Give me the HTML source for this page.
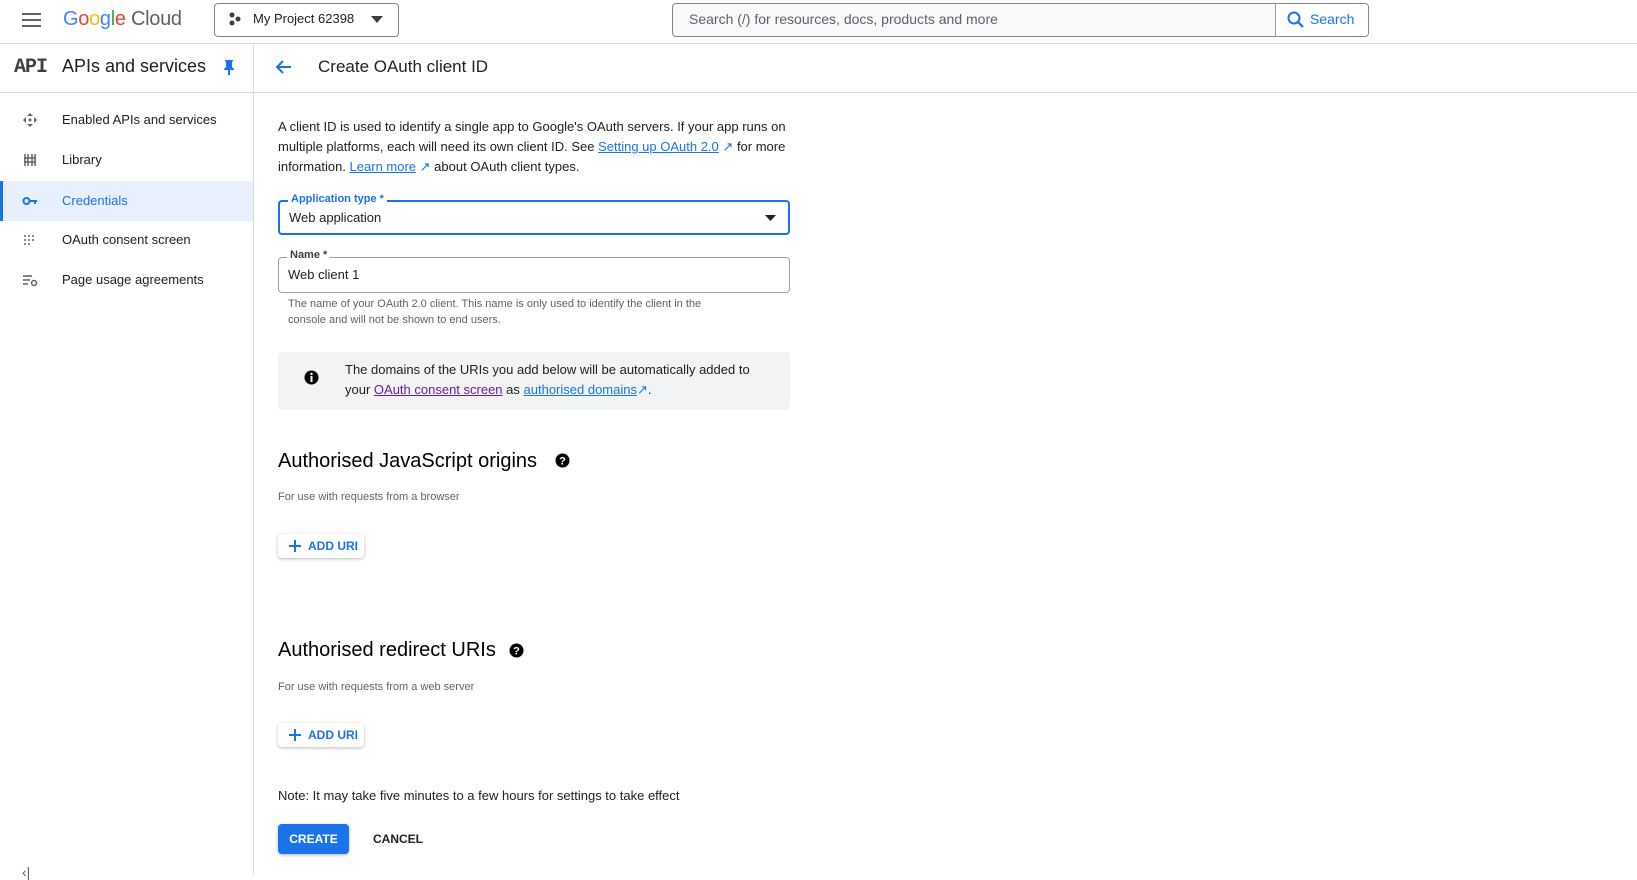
<!DOCTYPE html>
<html><head><meta charset="utf-8"><style>
*{box-sizing:border-box;margin:0;padding:0}
body{width:1637px;height:874px;overflow:hidden;background:#fff;font-family:"Liberation Sans",Arial,sans-serif;color:#202124;position:relative}
.a{position:absolute}
.hdr{top:0;left:0;width:1637px;height:44px;border-bottom:1px solid #dadce0}
.sub{top:44px;left:0;width:1637px;height:49px;border-bottom:1px solid #dadce0}
.side{top:44px;left:253px;width:1px;height:830px;background:#dadce0}
.nav{left:0;width:253px;height:40px;font-size:13px;line-height:40px;padding-left:62px;color:#202124}
.nav.act{background:#e8f0fe;color:#1a73e8;border-left:3px solid #1a73e8;padding-left:59px}
.ic{position:absolute;left:22px;top:12px}
.t13{font-size:13px;line-height:20px}
a{color:#1a73e8;text-decoration:underline}
.field{border:1px solid #9aa0a6;border-radius:4px;left:278px;width:512px}
.lab{position:absolute;top:-9px;left:8px;background:#fff;padding:0 3px;font-size:11px;font-weight:bold;color:#3c4043}
.btn{border-radius:4px;box-shadow:0 1px 3px rgba(60,64,67,.35);font-size:12px;font-weight:bold;color:#1a73e8;background:#fff}
h2{font-weight:normal;font-size:20px;color:#000}
</style></head><body>
<div class="a hdr"></div>
<svg class="a" style="left:22px;top:13px" width="19" height="14"><rect y="0" width="19" height="2" fill="#5f6368"/><rect y="6" width="19" height="2" fill="#5f6368"/><rect y="12" width="19" height="2" fill="#5f6368"/></svg>
<div class="a" style="left:63px;top:8px;font-size:20px;letter-spacing:-0.3px"><span style="color:#4285f4">G</span><span style="color:#ea4335">o</span><span style="color:#fbbc04">o</span><span style="color:#4285f4">g</span><span style="color:#34a853">l</span><span style="color:#ea4335">e</span> <span style="color:#5f6368">Cloud</span></div>
<div class="a" style="left:214px;top:3px;width:185px;height:34px;border:1px solid #80868b;border-radius:4px"></div>
<svg class="a" style="left:229px;top:12px" width="12" height="14"><circle cx="3" cy="3" r="2.5" fill="#3c4043"/><circle cx="9" cy="7" r="2.5" fill="#3c4043"/><circle cx="3" cy="11" r="2.5" fill="#3c4043"/></svg>
<div class="a" style="left:253px;top:11px;font-size:13px;color:#202124">My Project 62398</div>
<svg class="a" style="left:371px;top:16px" width="12" height="7"><path d="M0 0h12L6 7z" fill="#3c4043"/></svg>
<div class="a" style="left:672px;top:3px;width:697px;height:34px;border:1px solid #80868b;border-radius:4px;background:#f8f9fa"></div>
<div class="a" style="left:1275px;top:4px;width:93px;height:32px;background:#fff;border-left:1px solid #9aa0a6;border-radius:0 3px 3px 0"></div>
<div class="a" style="left:689px;top:11px;font-size:14px;color:#5f6368">Search (/) for resources, docs, products and more</div>
<svg class="a" style="left:1287px;top:11px" width="18" height="18"><circle cx="7" cy="7" r="5.5" stroke="#1a73e8" stroke-width="2" fill="none"/><path d="M11 11l5 5" stroke="#1a73e8" stroke-width="2.2"/></svg>
<div class="a" style="left:1310px;top:11px;font-size:14px;color:#1a73e8">Search</div>

<div class="a sub"></div>
<div class="a side"></div>
<div class="a" style="left:14px;top:56px;font-size:20px;font-weight:bold;color:#3c4043;font-family:'Liberation Mono',monospace;letter-spacing:-1px">API</div>
<div class="a" style="left:62px;top:56px;font-size:18px;color:#202124">APIs and services</div>
<svg class="a" style="left:223px;top:59px" width="12" height="16"><path d="M2 1h8v1l-1 1v5l2 2v1H7v5H5v-5H1v-1l2-2V3L2 2z" fill="#1a73e8"/></svg>
<svg class="a" style="left:274px;top:59px" width="18" height="16"><path d="M17 8H3M9 2L3 8l6 6" stroke="#1a73e8" stroke-width="2" fill="none"/></svg>
<div class="a" style="left:318px;top:57px;font-size:17px;color:#202124">Create OAuth client ID</div>

<div class="a nav" style="top:100px"><svg class="ic" width="16" height="16"><path d="M8 1l3 3H5zM8 15l-3-3h6zM1 8l3-3v6zM15 8l-3 3V5z" fill="#5f6368"/><circle cx="8" cy="8" r="1.5" fill="#5f6368"/></svg>Enabled APIs and services</div>
<div class="a nav" style="top:140px"><svg class="ic" width="16" height="16"><path d="M3 2v12M6 2v12M10 2v12M13 2v12M2 6h12M2 10h12" stroke="#5f6368" stroke-width="1.5"/></svg>Library</div>
<div class="a nav act" style="top:181px"><svg class="ic" width="16" height="16" style="left:19px"><circle cx="4.5" cy="8" r="3" stroke="#1a73e8" stroke-width="2" fill="none"/><path d="M7 7h8v2h-1v2h-2V9h-5z" fill="#1a73e8"/></svg>Credentials</div>
<div class="a nav" style="top:220px"><svg class="ic" width="16" height="16"><g fill="#5f6368"><circle cx="3" cy="4" r="1"/><circle cx="7" cy="4" r="1"/><circle cx="11" cy="4" r="1"/><circle cx="3" cy="8" r="1"/><circle cx="7" cy="8" r="1"/><circle cx="11" cy="8" r="1"/><circle cx="3" cy="12" r="1"/><circle cx="7" cy="12" r="1"/></g></svg>OAuth consent screen</div>
<div class="a nav" style="top:260px"><svg class="ic" width="16" height="16"><path d="M1 4h9M1 8h7M1 12h5" stroke="#5f6368" stroke-width="1.5"/><circle cx="12" cy="11" r="2.5" stroke="#5f6368" stroke-width="1.5" fill="none"/></svg>Page usage agreements</div>

<div class="a t13" style="left:278px;top:117px;width:520px">A client ID is used to identify a single app to Google's OAuth servers. If your app runs on multiple platforms, each will need its own client ID. See <a>Setting up OAuth 2.0</a> <span style="color:#1a73e8">↗</span> for more information. <a>Learn more</a> <span style="color:#1a73e8">↗</span> about OAuth client types.</div>

<div class="a field" style="top:200px;height:35px;border:2px solid #1a73e8"><div class="lab" style="color:#1a73e8">Application type *</div><div style="position:absolute;left:9px;top:8px;font-size:13px">Web application</div><svg style="position:absolute;right:12px;top:13px" width="11" height="6"><path d="M0 0h11L5.5 6z" fill="#202124"/></svg></div>
<div class="a field" style="top:257px;height:36px"><div class="lab">Name *</div><div style="position:absolute;left:9px;top:9px;font-size:13px">Web client 1</div></div>
<div class="a" style="left:288px;top:296px;width:450px;font-size:11px;line-height:16px;color:#5f6368">The name of your OAuth 2.0 client. This name is only used to identify the client in the console and will not be shown to end users.</div>

<div class="a" style="left:278px;top:352px;width:512px;height:58px;background:#f1f3f4;border-radius:4px"></div>
<svg class="a" style="left:304px;top:370px" width="15" height="15"><circle cx="7.5" cy="7.5" r="7" fill="#000"/><rect x="6.5" y="6" width="2" height="6" fill="#fff"/><circle cx="7.5" cy="4" r="1.2" fill="#fff"/></svg>
<div class="a t13" style="left:345px;top:360px;width:420px">The domains of the URIs you add below will be automatically added to your <a style="color:#681da8">OAuth consent screen</a> as <a>authorised domains</a><span style="color:#1a73e8">↗</span>.</div>

<h2 class="a" style="left:278px;top:450px">Authorised JavaScript origins</h2>
<svg class="a" style="left:555px;top:453px" width="15" height="15"><circle cx="7.5" cy="7.5" r="7" fill="#000"/><text x="7.5" y="11.5" font-size="11" font-weight="bold" fill="#fff" text-anchor="middle" font-family="Liberation Sans">?</text></svg>
<div class="a" style="left:278px;top:491px;font-size:11px;color:#5f6368">For use with requests from a browser</div>
<div class="a btn" style="left:278px;top:534px;width:86px;height:24px;line-height:24px;padding-left:30px">ADD URI</div>
<svg class="a" style="left:289px;top:540px" width="12" height="12"><path d="M6 0v12M0 6h12" stroke="#1a73e8" stroke-width="2"/></svg>

<h2 class="a" style="left:278px;top:639px">Authorised redirect URIs</h2>
<svg class="a" style="left:509px;top:643px" width="15" height="15"><circle cx="7.5" cy="7.5" r="7" fill="#000"/><text x="7.5" y="11.5" font-size="11" font-weight="bold" fill="#fff" text-anchor="middle" font-family="Liberation Sans">?</text></svg>
<div class="a" style="left:278px;top:681px;font-size:11px;color:#5f6368">For use with requests from a web server</div>
<div class="a btn" style="left:278px;top:723px;width:86px;height:24px;line-height:24px;padding-left:30px">ADD URI</div>
<svg class="a" style="left:289px;top:729px" width="12" height="12"><path d="M6 0v12M0 6h12" stroke="#1a73e8" stroke-width="2"/></svg>

<div class="a t13" style="left:278px;top:786px">Note: It may take five minutes to a few hours for settings to take effect</div>
<div class="a" style="left:278px;top:824px;width:71px;height:30px;background:#1a73e8;border-radius:4px;color:#fff;font-size:12px;font-weight:bold;line-height:30px;text-align:center;box-shadow:0 1px 3px rgba(60,64,67,.4)">CREATE</div>
<div class="a" style="left:373px;top:832px;font-size:12px;font-weight:bold;color:#202124">CANCEL</div>
<div class="a" style="left:22px;top:864px;font-size:14px;color:#5f6368">‹|</div>
</body></html>
